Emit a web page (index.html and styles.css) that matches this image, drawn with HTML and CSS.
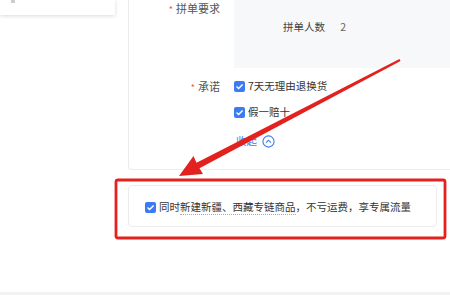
FILE: index.html
```html
<!DOCTYPE html>
<html lang="zh-CN">
  <head>
    <title>拼单设置</title>
    <meta charset="utf-8" />
    <link rel="stylesheet" href="styles.css">
  </head>
  <body>
    <div class="top">
      <div class="aside">
        <div class="mini-card"><span class="mini-mark"></span></div>
      </div>

      <div class="panel">
        <div class="form-row">
          <div class="label"><span class="req">*</span>拼单要求</div>
          <div class="group-box">
            <span class="group-name">拼单人数</span>
            <span class="group-value">2</span>
          </div>
        </div>

        <div class="form-row promise">
          <div class="label"><span class="req">*</span>承诺</div>
          <div class="checks">
            <label class="check"><span class="box"></span><span>7天无理由退换货</span></label>
            <label class="check"><span class="box"></span><span>假一赔十</span></label>
            <span class="fold">收起
              <svg class="fold-icon" viewBox="0 0 14 14" width="13" height="13">
                <circle cx="7" cy="7" r="6" fill="none" stroke="#3d7cf0" stroke-width="1.2" />
                <path d="M4.3 8.3 L7 5.6 L9.7 8.3" fill="none" stroke="#3d7cf0" stroke-width="1.2" />
              </svg>
            </span>
          </div>
        </div>
      </div>
    </div>

    <div class="extra">
      <label class="check"><span class="box"></span><span>同时<span class="dotted">新建新疆、西藏专链商品</span>，不亏运费，享专属流量</span></label>
    </div>

    <div class="footer-line"></div>

    <!-- annotation drawn over the screenshot -->
    <svg class="mark" viewBox="0 0 450 295" width="450" height="295">
      <rect x="116" y="180" width="329" height="58" rx="2" fill="none" stroke="#e3211f" stroke-width="2.8" />
      <polygon fill="#e3211f"
        points="400.5,61 199.5,168.3 203,174 179,176 193.5,156 196.5,162.8 399.5,59" />
    </svg>
  </body>
</html>
```

FILE: styles.css
```css
body {
  margin: 0;
  width: 450px;
  height: 295px;
  overflow: hidden;
  position: relative;
  display: flex;
  flex-direction: column;
  background: #fff;
  color: #333;
  font-family: "Noto Sans CJK SC", "Noto Sans", sans-serif;
  font-size: 10.5px;
}

.top {
  display: flex;
  height: 170px;
}

.aside {
  width: 128px;
  flex-shrink: 0;
}

.mini-card {
  width: 115px;
  height: 15px;
  background: #fff;
  box-shadow: 0 1px 4px rgba(0, 0, 0, 0.15);
  position: relative;
}

.mini-mark {
  display: block;
  margin-left: 11px;
  width: 4px;
  height: 3px;
  background: #ccc;
}

.panel {
  flex: 1;
  border-left: 1px solid #ececec;
  border-bottom: 1px solid #ececec;
  border-bottom-left-radius: 4px;
}

.form-row {
  display: flex;
  gap: 14px;
}

.label {
  width: 91px;
  flex-shrink: 0;
  text-align: right;
  line-height: 16px;
  font-size: 11px;
  color: #555;
}

.req {
  color: #f0564a;
  margin-right: 3px;
  font-size: 9px;
}

.group-box {
  flex: 1;
  height: 68px;
  background: #f7f8fa;
  box-sizing: border-box;
  padding: 19px 0 0 49px;
  line-height: 16px;
}

.group-name {
  color: #444;
}

.group-value {
  margin-left: 13px;
  color: #666;
}

.promise {
  margin-top: 10px;
}

.checks {
  display: flex;
  flex-direction: column;
  align-items: flex-start;
  gap: 10px;
}

.check {
  display: flex;
  align-items: center;
  gap: 3px;
  line-height: 16px;
  color: #333;
}

.box {
  width: 11px;
  height: 11px;
  border-radius: 2px;
  background: #3d7cf0 url("data:image/svg+xml,%3Csvg xmlns='http://www.w3.org/2000/svg' viewBox='0 0 11 11'%3E%3Cpath d='M2.5 5.6 L4.6 7.6 L8.6 3.4' fill='none' stroke='white' stroke-width='1.4'/%3E%3C/svg%3E") no-repeat center;
  flex-shrink: 0;
}

.fold {
  margin-top: 3px;
  margin-left: 2px;
  display: flex;
  align-items: center;
  gap: 5px;
  line-height: 16px;
  color: #3d7cf0;
}

.extra {
  margin: 15px 13px 0 128px;
  height: 42px;
  box-sizing: border-box;
  border: 1px solid #ececec;
  border-radius: 4px;
  padding-left: 16px;
  display: flex;
  align-items: center;
}

.extra .check {
  margin-top: 2px;
}

.dotted {
  border-bottom: 1px dotted #aaa;
}

.footer-line {
  margin-top: auto;
  height: 3px;
  background: #f2f2f2;
}

.mark {
  position: absolute;
  left: 0;
  top: 0;
  pointer-events: none;
}
```
